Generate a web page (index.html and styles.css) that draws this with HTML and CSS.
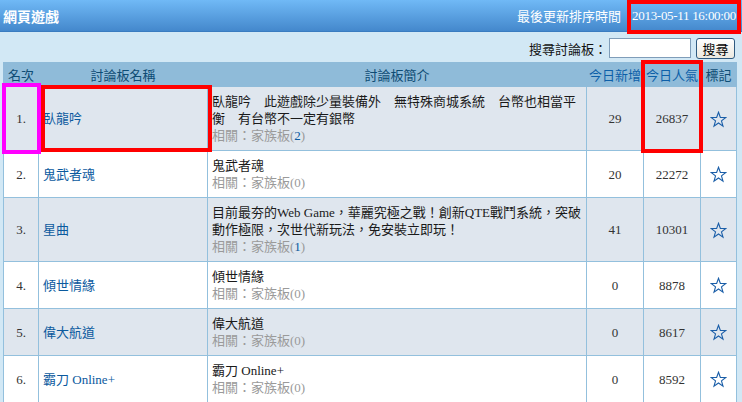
FILE: index.html
```html
<!DOCTYPE html>
<html lang="zh-Hant">
<head>
<meta charset="utf-8">
<title>網頁遊戲</title>
<link rel="stylesheet" href="styles.css">
</head>
<body>
<div class="topbar">
  <h1 class="title">網頁遊戲</h1>
  <div class="update">
    <span class="update-label">最後更新排序時間</span>
    <span class="update-time">2013-05-11 16:00:00</span>
  </div>
</div>
<form class="search">
  <label class="search-label" for="q">搜尋討論板：</label>
  <input class="search-input" id="q" type="text">
  <button class="search-btn" type="button">搜尋</button>
</form>
<div class="board">
<table class="rank">
  <colgroup>
    <col class="c-rank"><col class="c-name"><col class="c-desc"><col class="c-new"><col class="c-pop"><col class="c-mark">
  </colgroup>
  <thead>
    <tr>
      <th class="h-rank">名次</th>
      <th>討論板名稱</th>
      <th>討論板簡介</th>
      <th><a class="sort" href="#">今日新增</a></th>
      <th><a class="sort" href="#">今日人氣</a></th>
      <th>標記</th>
    </tr>
  </thead>
  <tbody>
    <tr class="odd">
      <td class="num">1.</td>
      <td class="name"><a href="#">臥龍吟</a></td>
      <td class="desc">臥龍吟　此遊戲除少量裝備外　無特殊商城系統　台幣也相當平衡　有台幣不一定有銀幣<div class="rel">相關：家族板(<a href="#">2</a>)</div></td>
      <td class="num">29</td>
      <td class="num">26837</td>
      <td class="mark"><svg class="star" viewBox="0 0 20 20"><polygon points="10,1.5 12.2,7.6 18.6,7.7 13.5,11.6 15.3,17.8 10,14.1 4.7,17.8 6.5,11.6 1.4,7.7 7.8,7.6"/></svg></td>
    </tr>
    <tr>
      <td class="num">2.</td>
      <td class="name"><a href="#">鬼武者魂</a></td>
      <td class="desc">鬼武者魂<div class="rel">相關：家族板(0)</div></td>
      <td class="num">20</td>
      <td class="num">22272</td>
      <td class="mark"><svg class="star" viewBox="0 0 20 20"><polygon points="10,1.5 12.2,7.6 18.6,7.7 13.5,11.6 15.3,17.8 10,14.1 4.7,17.8 6.5,11.6 1.4,7.7 7.8,7.6"/></svg></td>
    </tr>
    <tr class="odd">
      <td class="num">3.</td>
      <td class="name"><a href="#">星曲</a></td>
      <td class="desc">目前最夯的Web Game，華麗究極之戰！創新QTE戰鬥系統，突破動作極限，次世代新玩法，免安裝立即玩！<div class="rel">相關：家族板(<a href="#">1</a>)</div></td>
      <td class="num">41</td>
      <td class="num">10301</td>
      <td class="mark"><svg class="star" viewBox="0 0 20 20"><polygon points="10,1.5 12.2,7.6 18.6,7.7 13.5,11.6 15.3,17.8 10,14.1 4.7,17.8 6.5,11.6 1.4,7.7 7.8,7.6"/></svg></td>
    </tr>
    <tr>
      <td class="num">4.</td>
      <td class="name"><a href="#">傾世情緣</a></td>
      <td class="desc">傾世情緣<div class="rel">相關：家族板(0)</div></td>
      <td class="num">0</td>
      <td class="num">8878</td>
      <td class="mark"><svg class="star" viewBox="0 0 20 20"><polygon points="10,1.5 12.2,7.6 18.6,7.7 13.5,11.6 15.3,17.8 10,14.1 4.7,17.8 6.5,11.6 1.4,7.7 7.8,7.6"/></svg></td>
    </tr>
    <tr class="odd">
      <td class="num">5.</td>
      <td class="name"><a href="#">偉大航道</a></td>
      <td class="desc">偉大航道<div class="rel">相關：家族板(0)</div></td>
      <td class="num">0</td>
      <td class="num">8617</td>
      <td class="mark"><svg class="star" viewBox="0 0 20 20"><polygon points="10,1.5 12.2,7.6 18.6,7.7 13.5,11.6 15.3,17.8 10,14.1 4.7,17.8 6.5,11.6 1.4,7.7 7.8,7.6"/></svg></td>
    </tr>
    <tr>
      <td class="num">6.</td>
      <td class="name"><a href="#">霸刀 Online+</a></td>
      <td class="desc">霸刀 Online+<div class="rel">相關：家族板(0)</div></td>
      <td class="num">0</td>
      <td class="num">8592</td>
      <td class="mark"><svg class="star" viewBox="0 0 20 20"><polygon points="10,1.5 12.2,7.6 18.6,7.7 13.5,11.6 15.3,17.8 10,14.1 4.7,17.8 6.5,11.6 1.4,7.7 7.8,7.6"/></svg></td>
    </tr>
  </tbody>
</table>
</div>
<div class="hl hl-time"></div>
<div class="hl hl-rank"></div>
<div class="hl hl-name"></div>
<div class="hl hl-pop"></div>
</body>
</html>
```

FILE: styles.css
```css
* { box-sizing: border-box; }
html, body {
  margin: 0;
  padding: 0;
}
body {
  position: relative;
  width: 742px;
  height: 402px;
  overflow: hidden;
  background: #d2e8f5;
  font-family: "Liberation Serif", "Noto Sans CJK TC", serif;
  font-size: 13px;
  color: #222;
}
a { text-decoration: none; color: #0b5a9e; }

.topbar {
  display: flex;
  align-items: center;
  justify-content: space-between;
  height: 32px;
  background: linear-gradient(#70b9f6, #4488cc);
  border-bottom: 1px solid #3a7cc0;
  color: #fff;
}
.title {
  margin: 0 0 0 3px;
  font-family: "Noto Sans CJK TC", sans-serif;
  font-size: 14px;
  font-weight: bold;
  line-height: 20px;
}
.update {
  display: flex;
  align-items: center;
  gap: 11px;
  padding-right: 6px;
}
.update-label {
  line-height: 17px;
  font-family: "Noto Sans CJK TC", sans-serif;
}
.update-time {
  line-height: 17px;
  letter-spacing: -0.3px;
}

.search {
  display: flex;
  justify-content: flex-end;
  align-items: center;
  height: 30px;
  padding: 2px 7px 0 0;
  margin: 0;
}
.search-label {
  font-family: "Noto Sans CJK TC", sans-serif;
  color: #111;
  margin-right: 2px;
}
.search-input {
  width: 82px;
  height: 20px;
  border: 1px solid #7f9db9;
  background: #fff;
  margin: 0 5px 0 0;
  padding: 0;
}
.search-btn {
  width: 39px;
  height: 21px;
  padding: 0;
  border: 1px solid #2f5a80;
  border-radius: 3px;
  background: linear-gradient(#ffffff, #ece9e0);
  font-family: "Noto Sans CJK TC", sans-serif;
  font-size: 13px;
  color: #000;
}

.board { padding-left: 3px; }
.rank {
  border-collapse: collapse;
  table-layout: fixed;
  width: 733px;
}
.c-rank { width: 35px; }
.c-name { width: 169px; }
.c-desc { width: 379px; }
.c-new { width: 57px; }
.c-pop { width: 57px; }
.c-mark { width: 36px; }

.rank th {
  height: 24px;
  background: #8fbbd9;
  border: 1px solid #8fbbd9;
  color: #0e4c74;
  font-weight: normal;
  font-family: "Noto Sans CJK TC", sans-serif;
  font-size: 13px;
  padding: 0;
  line-height: 17px;
}
.rank th.h-rank { text-align: left; padding-left: 4px; }
.rank th .sort { color: #0d5fa8; }

.rank td {
  border: 1px solid #93c0dd;
  padding: 6px 4px;
  line-height: 17px;
  vertical-align: middle;
  background: #fff;
}
.rank tr.odd td { background: #dfe6ee; }
.rank td.num { text-align: center; color: #333; }
.rank td.name { padding-left: 4px; }
.rank td.desc { padding-left: 4px; color: #1a1a1a; }
.rel { color: #9a9a9a; }
.rel a { color: #0b5a9e; }
.rank td.mark { text-align: center; padding: 0; }
.star {
  width: 17px;
  height: 17px;
  display: inline-block;
  vertical-align: middle;
  fill: none;
  stroke: #1a5ea8;
  stroke-width: 1.3;
  stroke-linejoin: miter;
}

.hl {
  position: absolute;
  border: 4px solid #ff0000;
  pointer-events: none;
}
.hl-time { left: 627px; top: 0; width: 114px; height: 34px; }
.hl-rank { left: 2px; top: 83px; width: 39px; height: 71px; border-color: #ff00ff; }
.hl-name { left: 41px; top: 85px; width: 171px; height: 67px; }
.hl-pop { left: 641px; top: 60px; width: 62px; height: 93px; }
```
